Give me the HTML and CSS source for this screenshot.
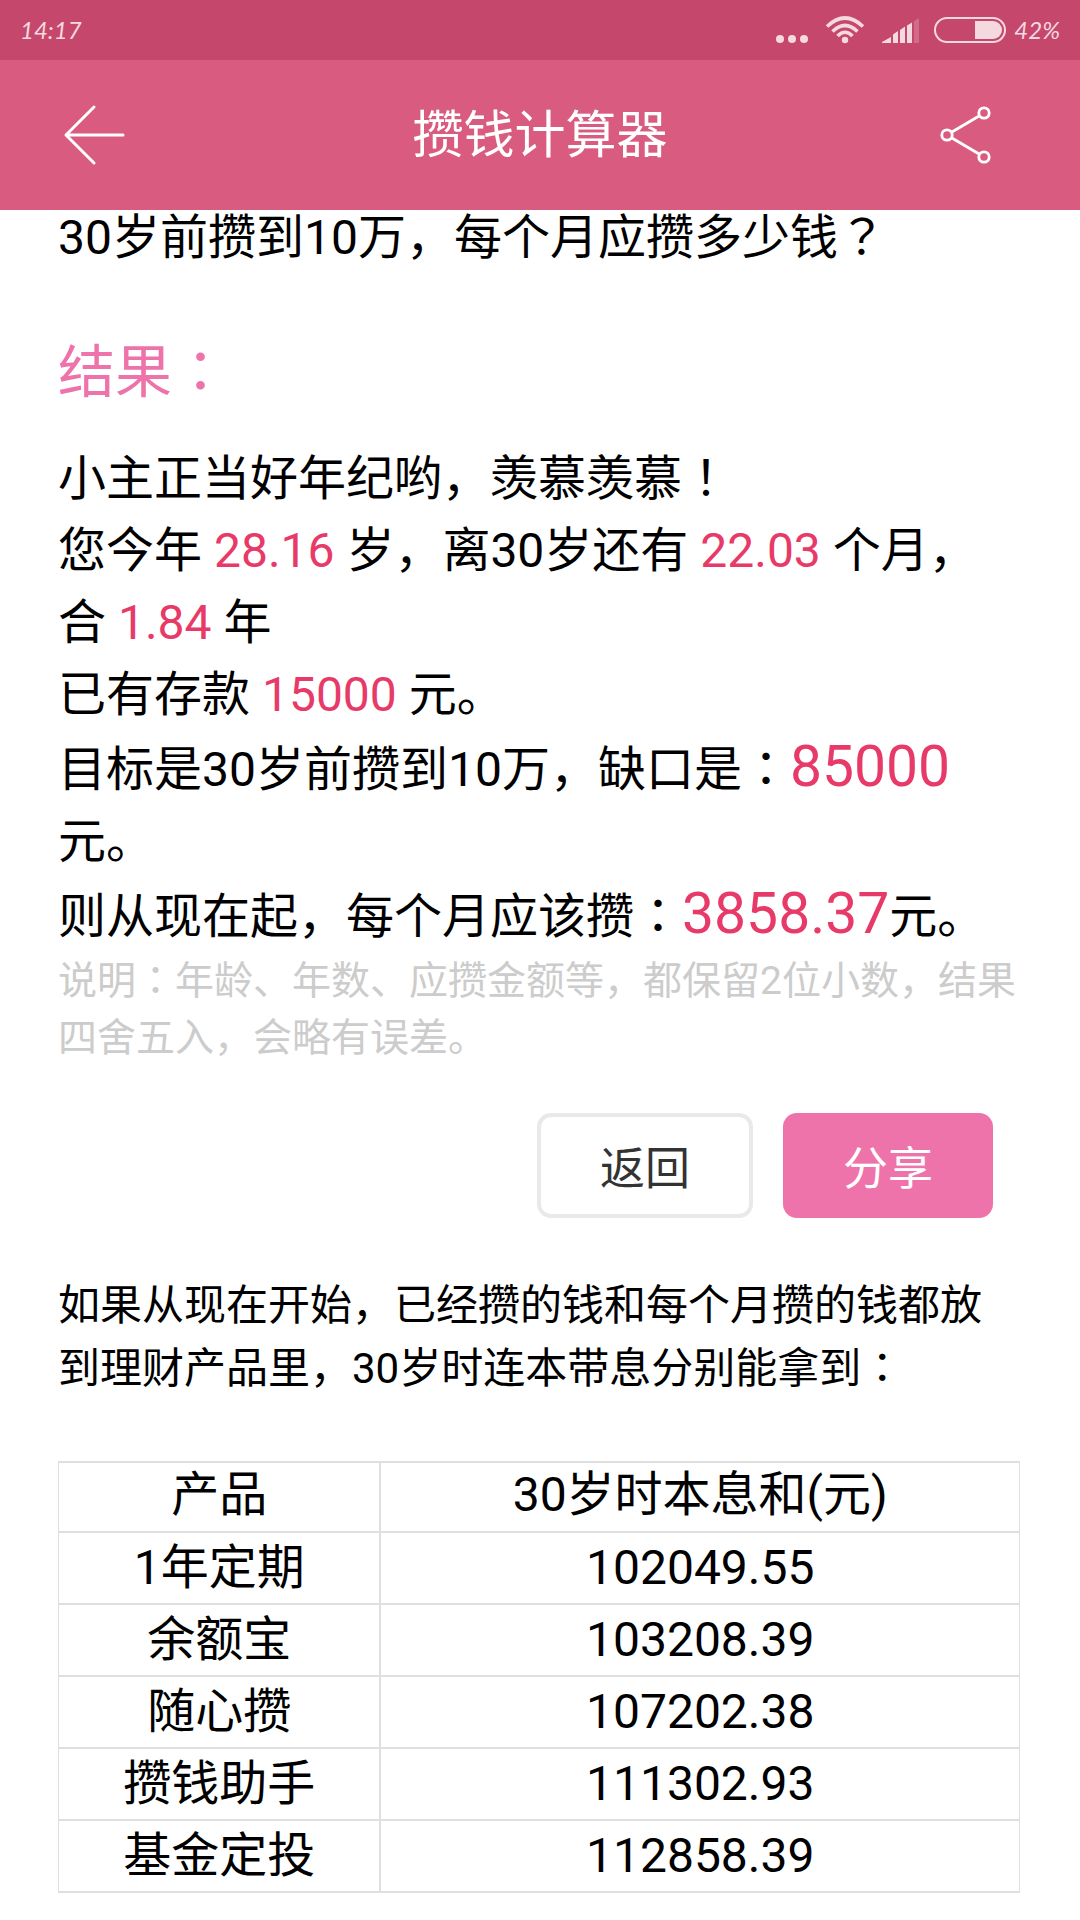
FILE: index.html
```html
<!DOCTYPE html>
<html lang="zh-CN">
<head>
<meta charset="utf-8">
<meta name="viewport" content="width=device-width">
<title>攒钱计算器</title>
<link rel="stylesheet" href="styles.css">
</head>
<body>
<div class="status">
  <span>14:17</span>
  <div class="status-icons">
    <svg width="34" height="28" viewBox="0 0 34 28"><g fill="currentColor"><circle cx="5" cy="23" r="4"/><circle cx="17" cy="23" r="4"/><circle cx="29" cy="23" r="4"/></g></svg>
    <svg class="wifi" width="40" height="28" viewBox="0 0 40 28"><g fill="none" stroke="currentColor" stroke-width="3.6"><path d="M2 10.500Q20 -6.500 38 10.500"/><path d="M7.500 15.500Q20 3.500 32.500 15.500"/><path d="M12.500 20Q20 12.500 27.500 20"/></g><circle cx="20" cy="24" r="3.200" fill="currentColor"/></svg>
    <svg class="signal" width="38" height="28" viewBox="0 0 38 28"><g fill="currentColor"><path d="M0 27v-1l9-5v6z"/><path d="M11 27V18.500l5-3.500v12z"/><path d="M18 27V14l5-3.500V27z"/><path d="M25 27V9.500L30 6.500V27z"/><path d="M32 27V5l5-3V27z" opacity=".25"/></g></svg>
    <svg class="battery" width="72" height="28" viewBox="0 0 72 28"><rect x="1" y="2" width="70" height="24" rx="12" fill="none" stroke="currentColor" stroke-width="2"/><path d="M41 5h18a9 9 0 0 1 0 18H41z" fill="currentColor"/></svg>
    <span>42%</span>
  </div>
</div>
<header class="bar">
  <button class="icon-button back" type="button" aria-label="返回上一页"><svg width="62" height="62" viewBox="0 0 62 62"><path d="M31 3L3 31L31 59M3 31H60" fill="none" stroke="currentColor" stroke-width="3" stroke-linecap="round" stroke-linejoin="round"/></svg></button>
  <h1>攒钱计算器</h1>
  <button class="icon-button share" type="button" aria-label="分享计算器"><svg width="52" height="62" viewBox="0 0 52 62"><g fill="none" stroke="currentColor" stroke-width="2.800"><circle cx="7" cy="31" r="5.200"/><circle cx="44" cy="9" r="5.200"/><circle cx="44" cy="53" r="5.200"/><path d="M11.500 28.300L39.500 11.700M11.500 33.700L39.500 50.300"/></g></svg></button>
</header>
<main class="content">
  <p class="question">30岁前攒到10万，每个月应攒多少钱<span class="mark">？</span></p>
  <h2>结果<span class="mark">：</span></h2>
  <div class="result">
    <p>小主正当好年纪哟，羡慕羡慕<span class="mark">！</span></p>
    <p>您今年 <b>28.16</b> 岁，离30岁还有 <b>22.03</b> 个月，合 <b>1.84</b> 年</p>
    <p>已有存款 <b>15000</b> 元。</p>
    <p>目标是30岁前攒到10万，缺口是<span class="mark">：</span><b class="large">85000</b>元。</p>
    <p>则从现在起，每个月应该攒<span class="mark">：</span><b class="large">3858.37</b>元。</p>
  </div>
  <p class="note">说明<span class="mark">：</span>年龄、年数、应攒金额等，都保留2位小数，结果四舍五入，会略有误差。</p>
  <div class="actions">
    <button class="button" type="button">返回</button>
    <button class="button primary" type="button">分享</button>
  </div>
  <p class="intro">如果从现在开始，已经攒的钱和每个月攒的钱都放到理财产品里，30岁时连本带息分别能拿到<span class="mark">：</span></p>
  <table>
    <colgroup><col class="product"><col></colgroup>
    <thead><tr><th scope="col">产品</th><th scope="col">30岁时本息和(元)</th></tr></thead>
    <tbody>
      <tr><td>1年定期</td><td>102049.55</td></tr>
      <tr><td>余额宝</td><td>103208.39</td></tr>
      <tr><td>随心攒</td><td>107202.38</td></tr>
      <tr><td>攒钱助手</td><td>111302.93</td></tr>
      <tr><td>基金定投</td><td>112858.39</td></tr>
    </tbody>
  </table>
</main>
</body>
</html>
```
FILE: styles.css
```css
* { box-sizing: border-box; }

body {
  margin: 0;
  background: #fff;
  color: #000;
  font-family: Roboto, "Noto Sans CJK SC", sans-serif;
  font-size: 48px;
  line-height: 72px;
  text-spacing-trim: space-all;
}

p, h1, h2 { margin: 0; font-weight: 400; }
button { font-family: inherit; cursor: pointer; }
svg { display: block; }

.status {
  display: flex;
  align-items: center;
  justify-content: space-between;
  height: 60px;
  padding: 0 20px;
  background: #c5476b;
  color: #f5d9e1;
  font-family: Lato, sans-serif;
  font-size: 24px;
  font-style: italic;
  line-height: 28px;
}
.status-icons { display: flex; align-items: center; }
.wifi { margin-left: 16px; }
.signal { margin-left: 17px; }
.battery { margin: 0 8px 0 14px; }

.bar {
  display: grid;
  grid-template-columns: 1fr auto 1fr;
  align-items: center;
  height: 150px;
  background: #d95c80;
  color: #fff;
}
.bar h1 {
  padding-bottom: 8px;
  font-family: "Noto Sans CJK SC", sans-serif;
  font-size: 51px;
}
.icon-button { padding: 0; border: 0; background: none; color: inherit; }
.back { justify-self: start; margin-left: 63px; }
.share { justify-self: end; margin-right: 88px; }

.content { padding: 0 60px 27px 58px; }

/* Centres full-width colons and exclamation marks in their cell */
.mark { -webkit-locale: "ja"; }

.question { line-height: 56px; }
h2 { margin: 71px 0 34px; color: #ee73aa; font-size: 57px; }
.result b { color: #e83a68; font-weight: 400; }
.result .large { font-size: 57px; }
.note { color: #ccc; font-size: 39px; line-height: 57px; }

.actions {
  display: flex;
  justify-content: flex-end;
  gap: 30px;
  margin: 46px 27px 56px 0;
}
.button {
  height: 105px;
  padding: 0 59px;
  border: 4px solid #e8eaea;
  border-radius: 14px;
  background: #fff;
  color: #333;
  font-size: 45px;
}
.primary { padding: 0 60px; border: 0; background: #ee73aa; color: #fff; }

.intro { margin-bottom: 61px; font-size: 42px; line-height: 63px; }

table {
  width: 100%;
  border: 1px solid #dfdfdf;
  border-collapse: collapse;
  table-layout: fixed;
  text-align: center;
}
.product { width: 33.5%; }
th, td { padding: 0; font-weight: 400; line-height: 70px; }
th { padding-bottom: 4px; line-height: 64px; }
tr { border-top: 2px solid #dfdfdf; border-bottom: 2px solid #dfdfdf; }
td + td, th + th { border-left: 2px solid #dfdfdf; }
```
